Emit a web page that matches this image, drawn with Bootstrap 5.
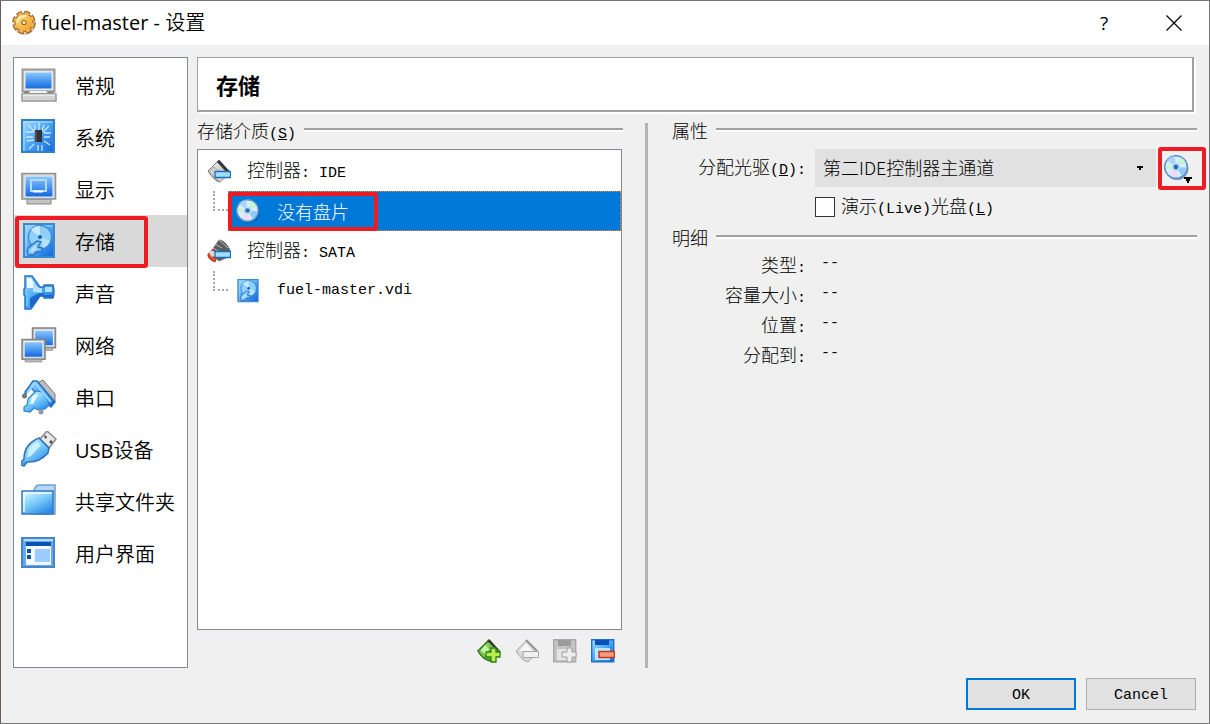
<!DOCTYPE html>
<html lang="zh-CN">
<head>
<meta charset="utf-8">
<meta name="viewport" content="width=device-width, initial-scale=1">
<title>fuel-master - 设置</title>
<link href="https://cdn.jsdelivr.net/npm/bootstrap@5.3.0/dist/css/bootstrap.min.css" rel="stylesheet">
<script src="https://cdn.jsdelivr.net/npm/bootstrap@5.3.0/dist/js/bootstrap.bundle.min.js"></script>
<style>
body{background:#f0f0f0;color:#000;font:300 18px/24px "Noto Sans CJK SC",sans-serif}
.en{font-family:"Liberation Mono",monospace;font-size:15px;font-weight:400;white-space:pre}
.window{min-height:100vh;border:1px solid #777;border-left-color:#6a5a58}
.titlebar{height:44px;background:#fff;font:400 20px/24px "Open Sans","Noto Sans CJK SC",sans-serif;padding:0 25px 0 10px}
.titlebar .zh{font-weight:350}
.cap{border:0;background:none;padding:0;width:20px;height:20px;line-height:20px;font-size:19px;display:flex;align-items:center;justify-content:center}
.work{padding:12px 12px 0 12px;gap:9px}
.side{width:175px;border:1px solid #828790;background:#fff;padding:1px 0;font:350 20px/24px "Open Sans","Noto Sans CJK SC",sans-serif}
.side a{height:52px;padding:4px 0 0 7px;gap:18px;color:#000;text-decoration:none;display:flex;align-items:center;position:relative}
.side a.active{background:#d9d9d9}
.side svg{width:36px;height:36px;flex:none;margin-bottom:4px}
.callout{position:absolute;border:4px solid #ed1c24;border-radius:3px;pointer-events:none}
.c-nav{left:1px;top:1px;width:133px;height:52px}
.c-tree{left:0;top:1px;width:150px;height:39px}
.c-btn{left:-3px;top:-2px;width:48px;height:43px}
.head{background:#fff;border:1px solid #a0a0a0;border-width:1px 2px 2px 1px;box-shadow:2px 2px 0 #fff;height:55px;padding-left:18px;margin-right:3px;display:flex;align-items:center}
.head h1{font-size:22px;font-weight:700;margin:0}
.panes{padding-top:11px}
.panes section{margin-top:-5px}
.grp{font-size:18px;font-weight:300;line-height:24px;height:24px;margin:0;gap:8px;display:flex;white-space:nowrap}
.grp::after{content:"";flex:1;height:4px;margin-top:10px;background:linear-gradient(#a0a0a0 50%,#fff 50%)}
.media{flex:0 0 426px}
.tree{background:#fff;border:1px solid #828790;padding:1px 0 0;margin:7px 1px 0 0}
.tree li{height:40px;display:flex;align-items:center;position:relative}
.tree svg{width:24px;height:24px;flex:none}
.ctl{padding-left:9px;gap:16px}
.leaf{padding-left:15px}
.leaf .stem{width:15px;height:20px;margin-bottom:20px;border:dotted #a8a8a8;border-width:0 0 2px 2px}
.leaf .node{height:40px;gap:17px;padding-left:8px;position:relative}
.leaf .node.active{background:#0078d7;color:#fff;outline:1px dotted #ff8728;outline-offset:-1px}
.tools{gap:14px;padding:9px 8px 5px}
.tools button{width:24px;height:24px;padding:0;border:0;background:none;display:flex}
.tools svg{width:24px;height:24px}
.splitter{width:3px;background:#b4b4b4;margin:0 24px 0 22px}
.fields{display:grid;grid-template-columns:134px 1fr;column-gap:9px;align-items:center;margin:0}
.form-rows{padding-top:7px}
.fields dt,.fields .lab{text-align:right;font-weight:300}
.fields dd{margin:0;padding-left:6px}
.fields dt,.fields dd{height:30px;line-height:30px}
.drive{height:38px;border:0;border-radius:0;padding:0 8px 2px;background:#e1e1e1 url("data:image/svg+xml,%3Csvg xmlns='http://www.w3.org/2000/svg' width='6' height='4'%3E%3Cpath d='M0 0h6v2H4v2H2V2H0z'/%3E%3C/svg%3E") no-repeat right 13px center;appearance:none;color:#000;font-weight:300}
.pick{width:36px;height:38px;border:0;padding:0;background:none;position:relative;margin-left:5px}
.pick svg{width:32px;height:32px;display:block;margin-left:2px}
.live-row{gap:6px;height:38px;padding-top:2px}
.tick{appearance:none;width:20px;height:20px;border:1px solid #333;background:#fff;margin:0}
.tick:checked{background:#0078d7}
.foot{gap:10px;padding:10px 13px 13px}
.foot .btn{width:110px;height:32px;border-radius:0;background:#e1e1e1;border:1px solid #adadad;padding:0;color:#000;line-height:24px}
.foot .btn.ok{border:2px solid #0078d7}
</style>
</head>
<body>
<svg width="0" height="0" class="position-absolute" aria-hidden="true">
<defs>
<linearGradient id="b" x1="0" y1="0" x2="1" y2="1"><stop offset="0" stop-color="#a6dcff"/><stop offset=".5" stop-color="#4aa5f5"/><stop offset="1" stop-color="#1465d6"/></linearGradient>
<linearGradient id="sc" x1="0" y1="0" x2="0" y2="1"><stop offset="0" stop-color="#8ccaff"/><stop offset="1" stop-color="#0f66e0"/></linearGradient>
<linearGradient id="li" x1="0" y1="0" x2=".7" y2="1"><stop offset="0" stop-color="#eafaff"/><stop offset=".5" stop-color="#7fd0fb"/><stop offset="1" stop-color="#2a8be8"/></linearGradient>
<linearGradient id="gd" x1="0" y1="0" x2="1" y2="1"><stop offset="0" stop-color="#ffe28a"/><stop offset="1" stop-color="#f09a1c"/></linearGradient>
<linearGradient id="gr" x1="0" y1="0" x2="1" y2="1"><stop offset="0" stop-color="#fff"/><stop offset="1" stop-color="#9c9c9c"/></linearGradient>
<linearGradient id="gn" x1="0" y1="0" x2="1" y2="1"><stop offset="0" stop-color="#b8f08a"/><stop offset="1" stop-color="#2c8f14"/></linearGradient>
<symbol id="disc" viewBox="0 0 24 24"><circle cx="12.500" cy="13" r="11" fill="#0a3c7c" opacity=".5"/><circle cx="11.500" cy="11.500" r="10.800" fill="#d9efff" stroke="#5a93cf" stroke-width="1.500"/><path d="M11.500 11.500 3 5a11 11 0 0 1 7-4z" fill="#a8d4fa"/><path d="M11.500 11.500 15 2a10 10 0 0 1 6 6z" fill="#c4f3d4"/><path d="M11.500 11.500 21 12a10 10 0 0 1-4 8z" fill="#94c8f8"/><path d="M11.500 11.500 13 21a10 10 0 0 1-8-3z" fill="#f3d8f4"/><path d="M11.500 11.500 2 14a10 10 0 0 1 0-5z" fill="#c6f5cc"/><circle cx="11.500" cy="11.500" r="4" fill="#b9dcf8"/><circle cx="11.500" cy="11.500" r="2.300" fill="#2b6cb8"/></symbol>
<symbol id="hdd" viewBox="0 0 36 36"><path d="M3 1h30v33H3z" fill="url(#b)" stroke="#3a8ad2" stroke-width="2"/><path d="M5 33V3h27" fill="none" stroke="#9fd4fb"/><circle cx="19" cy="14" r="11.500" fill="#8fd0fa" stroke="#3c8ad6" stroke-width="1.300"/><path d="M19 14 10 7a11 11 0 0 1 9-4z" fill="#c4e8fe"/><path d="M19 14 29 18a11 11 0 0 1-7 7z" fill="#b6e1fe"/><path d="M16 18 7 25q-2 5 1 7h4l3-3 6-1v-3l-4-1 3-5z" fill="#7fc4f5" stroke="#2d72c0" stroke-width="1.300"/><path d="m15 21-6 6 2 3 5-4" fill="#b2e0fc"/><circle cx="19" cy="14" r="2" fill="#155fb4"/></symbol>
<symbol id="mon" viewBox="0 0 24 24"><path d="M1 1h22v19H1z" fill="#c8c8c8" stroke="#858585" stroke-width="1.500"/><path d="M3 3h18v15H3z" fill="url(#sc)" stroke="#eee"/><path d="M4 20h16v2.500H4z" fill="#bbb" stroke="#888" stroke-width=".7"/></symbol>
</defs>
</svg>
<div class="window d-flex flex-column">
<header class="titlebar d-flex align-items-center">
<svg width="26" height="26" viewBox="0 0 26 26" class="me-1" aria-hidden="true"><circle cx="13.500" cy="14" r="11" fill="#7b5a3d" opacity=".3"/><circle cx="13" cy="12.500" r="9.500" fill="#9a622a" stroke="#9a622a" stroke-width="4.600" stroke-dasharray="5.400 2.060"/><circle cx="13" cy="12.500" r="8.500" fill="url(#gd)"/><circle cx="13" cy="12.500" r="9.200" fill="none" stroke="#f4b64c" stroke-width="2.600" stroke-dasharray="4 3.220" stroke-dashoffset="-.7"/><path d="M6 13q1-7 9-7" fill="none" stroke="#fff1b5" stroke-width="2"/><circle cx="13" cy="12.500" r="2.600" fill="#a25b10"/><circle cx="13" cy="12.500" r="1.500" fill="#fff"/></svg>
<span>fuel-master - <span class="zh">设置</span></span>
<div class="ms-auto d-flex" style="gap:50px">
<button class="cap" type="button" aria-label="帮助">?</button>
<button class="cap" type="button" aria-label="关闭"><svg width="16" height="16" viewBox="0 0 16 16"><path d="m.5.500 15 15m0-15-15 15" stroke="#000" stroke-width="1.200"/></svg></button>
</div>
</header>
<div class="work d-flex flex-grow-1">
<nav class="side flex-shrink-0">
<a href="#"><svg viewBox="0 0 36 36"><path d="M1.500 2.500h32v22h-32z" fill="#d8d8d8" stroke="#999" stroke-width="2"/><path d="M4 5h27v17H4z" fill="url(#sc)" stroke="#f4f4f4"/><path d="M4 24h27l4 4H1z" fill="#888"/><path d="M9 24h16l2 2H8z" fill="#f4f4f4"/><path d="M1 27h34v7H1z" fill="#d4d4d4" stroke="#999" stroke-width="1.500"/><path d="M2 28h32" stroke="#fff"/></svg>常规</a>
<a href="#"><svg viewBox="0 0 36 36"><path d="M1 1h32v32H1z" fill="url(#b)" stroke="#2f7fd0" stroke-width="2"/><path d="M3 32V3h29" fill="none" stroke="#b9defa"/><path d="M14 6v6m4-8v7m5-5-2 6M5 13h8m-8 5h7m-6 4 7-1m0 4-5 5m9-4v6m4-6v6m2-18h7m-7 4h6m-6 4 6 4M7 6l6 6M28 7l-6 6" stroke="#c8e6fe" stroke-width="1.300"/><path d="M14 11h7v12h-7z" fill="#333"/><path d="M14 12h2v11h-2z" fill="#5b4a42"/></svg>系统</a>
<a href="#"><svg viewBox="0 0 36 36"><path d="M6 28h24v5H6z" fill="#c4c4c4" stroke="#858585"/><path d="M1 2.500h33.500V28H1z" fill="#ccc" stroke="#929292" stroke-width="1.600"/><path d="M4 5h28v21H4z" fill="url(#sc)" stroke="#edf5ff"/><path d="M10 9h15v11H10z" fill="none" stroke="#b2dcff" stroke-width="2"/><path d="M12 20.500h10" stroke="#fff" stroke-width="2"/></svg>显示</a>
<a href="#" class="active"><svg><use href="#hdd"/></svg>存储<span class="callout c-nav"></span></a>
<a href="#"><svg viewBox="0 0 36 36"><path d="M4 1h7l8 11h4v-2h9q2 7 0 13h-9v-2h-4l-9 13H4V21l-1-1v-6l1-1z" fill="url(#b)" stroke="#2a72c0" stroke-width="1.500"/><path d="M6 3h4l6 10H6z" fill="#ebfaff"/><path d="m9 23 9-5h5v2h9v2h-8l-5-1-8 11H9z" fill="#1969cf"/><path d="M6 16v15" stroke="#57d0f6" stroke-width="2"/><path d="M12 8v9l9 1v-5h-3zm12 4v5h7v-5z" fill="#b2e2fc"/></svg>声音</a>
<a href="#"><svg viewBox="0 0 36 36"><use href="#mon" x="10" y="0" width="26" height="25"/><use href="#mon" x="0" y="11" width="25" height="26"/></svg>网络</a>
<a href="#"><svg viewBox="0 0 36 36"><path d="m18 3 4-2 12 14v8l-3-1-3 4-7-4z" fill="#bebebe" stroke="#777"/><path d="m4 13 8-11h4l18 21-4 5-5-4-15-15-6 7z" fill="url(#b)" stroke="#236ebb" stroke-width="1.300"/><path d="m7 20 8-8 6 1 6 8 1 5-4 4-7 1-4-2-4 4-6-1v-4l3-2z" fill="url(#li)" stroke="#3084cc" stroke-width="1.200"/><path d="m6 14 8-10 16 19" fill="none" stroke="#98d7ff" stroke-width="2"/><circle cx="3.500" cy="17" r="2.500" fill="#777"/><circle cx="20" cy="33" r="2.500" fill="#999"/><path d="M11 18q3-4 6-2l-5 9H9z" fill="#e8faff"/></svg>串口</a>
<a href="#"><svg viewBox="0 0 36 36"><path d="m19 8 7-8 9 8-7 9z" fill="#e8e8e8" stroke="#8a8a8a" stroke-width="1.500"/><path d="m23 6 1-2 2 2-1 2zm5 5 2-2 2 2-2 2z" fill="#555"/><path d="m18 7 10 10-1 5Q18 32 6 31l-3 4-3-1v-3l3-3Q3 13 18 7z" fill="url(#li)" stroke="#2f70b7" stroke-width="1.500"/><path d="M8 18q4-6 9-7l3 3-10 11-4 2z" fill="#dcf6ff" opacity=".8"/><path d="m1 32 4-2-2 4z" fill="#348ee2"/></svg><span><span class="fw-normal">USB</span>设备</span></a>
<a href="#"><svg viewBox="0 0 36 36"><path d="M13 7q2-5 5-5h16v29H10z" fill="#b5d7f7" stroke="#6c9fd7" stroke-width="1.500"/><path d="M1 8h31v23H1z" fill="url(#li)" stroke="#3978bd" stroke-width="1.500"/><path d="M3 29V10h28" fill="none" stroke="#effcff" stroke-width="1.500"/></svg>共享文件夹</a>
<a href="#"><svg viewBox="0 0 36 36"><path d="M1 3h32v29H1z" fill="#65aaf0" stroke="#4684cc" stroke-width="2"/><path d="M3 5h29" stroke="#b8dcff" stroke-width="2"/><path d="M5 7h25v23H5z" fill="#f3f8ff"/><path d="M5 7h25v4H5zM6 14h4v4H6zm0 6h4v4H6z" fill="#0b50b4"/><path d="M14 14h15v13H14z" fill="#9ccbff"/></svg>用户界面</a>
</nav>
<main class="flex-grow-1 d-flex flex-column">
<div class="head"><h1>存储</h1></div>
<div class="panes d-flex flex-grow-1">
<section class="media d-flex flex-column">
<h2 class="grp"><span>存储介质<span class="en">(<u>S</u>)</span></span></h2>
<ul class="tree list-unstyled flex-grow-1 mb-0">
<li class="ctl"><svg viewBox="0 0 24 24"><path d="m1 12 11-11 11 12-10 10q-6-1-12-11z" fill="url(#gr)" stroke="#777"/><path d="m10 3 2-2 11 12-2 2z" fill="#333"/><path d="m2 13 5-5 12 10-6 5z" fill="#d5d5d5" stroke="#888" stroke-width=".7"/><path d="M8 12.500h15.500v6H8z" fill="#9ee0ff" stroke="#226eb5" stroke-width="1.300"/></svg><span>控制器<span class="en">: IDE</span></span></li>
<li class="leaf"><span class="stem"></span><div class="node active flex-grow-1 d-flex align-items-center"><svg><use href="#disc"/></svg>没有盘片<span class="callout c-tree"></span></div></li>
<li class="ctl"><svg viewBox="0 0 24 24"><path d="m3 14 9-13q6 0 11 10v6L12 22z" fill="#5c5c5c" stroke="#777"/><path d="m8 5 7 4M6 9l7 4m-1-12 9 8" stroke="#bbb"/><path d="m1 15 5-4 5 4-3 8-4-2q-4-3-3-6z" fill="#e74c2e" stroke="#ad321e"/><path d="M2 14q1-3 5-2l2 4-4 2z" fill="#d8d8d8"/><path d="M8 12.500h15.500v6H8z" fill="#9ee0ff" stroke="#226eb5" stroke-width="1.300"/></svg><span>控制器<span class="en">: SATA</span></span></li>
<li class="leaf"><span class="stem"></span><div class="node flex-grow-1 d-flex align-items-center"><svg><use href="#hdd"/></svg><span class="en">fuel-master.vdi</span></div></li>
</ul>
<div class="tools d-flex justify-content-end">
<button type="button" aria-label="添加控制器"><svg viewBox="0 0 24 24"><path d="m1 12 11-11 11 12-9 9q-8-1-13-10z" fill="url(#gn)" stroke="#28730f" stroke-width="1.500"/><path d="m10 2 3-1 9 10-3-1z" fill="#333"/><path d="m4 11 4-5 4 4-3 6z" fill="#c8f6a6"/><path d="M14 9h5v4h4v5h-4v5h-5v-5h-5v-5h5z" fill="#b7ee54" stroke="#347e12" stroke-width="1.300"/></svg></button>
<button type="button" aria-label="删除控制器"><svg viewBox="0 0 24 24"><path d="m1 12 11-11 11 12-10 10q-6-1-12-11z" fill="#d8d8d8" stroke="#aaa"/><path d="m4 12 7-8 7 8z" fill="#f6f6f6"/><path d="m11 1 11 11" stroke="#969696" stroke-width="2"/><path d="M8 12.500h15.500v6H8z" fill="#f0f0f0" stroke="#a5a5a5"/></svg></button>
<button type="button" aria-label="添加虚拟盘"><svg viewBox="0 0 24 24"><path d="M.7.700h22v22h-22z" fill="#c4c4c4" stroke="#a9a9a9" stroke-width="1.400"/><path d="M5 1h13v6H5z" fill="#9d9d9d"/><path d="M4 10h15v11H4z" fill="#e5e5e5"/><path d="M14 9h5v4h4v5h-4v5h-5v-5H9v-5h5z" fill="#eee" stroke="#a0a0a0"/></svg></button>
<button type="button" aria-label="删除虚拟盘"><svg viewBox="0 0 24 24"><path d="M.7.700h22v22h-22z" fill="url(#b)" stroke="#1d70cd" stroke-width="1.400"/><path d="M4 1h14v5H4z" fill="#0750b7"/><path d="M4 9h15v12H4z" fill="#b9e8ff"/><path d="M8 12.500h15.500v6H8z" fill="#f79a7f" stroke="#bf3a21" stroke-width="1.500"/></svg></button>
</div>
</section>
<div class="splitter flex-shrink-0"></div>
<section class="flex-grow-1">
<h2 class="grp">属性</h2>
<div class="fields form-rows">
<label class="lab" for="drive">分配光驱<span class="en">(<u>D</u>):</span></label>
<div class="d-flex"><select id="drive" class="drive flex-grow-1"><option>第二IDE控制器主通道</option></select>
<button class="pick" type="button" aria-label="选择虚拟光盘"><svg viewBox="0 0 32 32"><use href="#disc" x="1" y="3" width="25" height="25"/><path d="M21 25h8v2h-2v2h-1v2h-2v-2h-1v-2h-2z"/></svg><span class="callout c-btn"></span></button></div>
<span></span>
<div class="live-row d-flex align-items-center"><input class="tick" type="checkbox" id="live"><label for="live">演示<span class="en">(Live)</span>光盘<span class="en">(<u>L</u>)</span></label></div>
</div>
<h2 class="grp">明细</h2>
<dl class="fields">
<dt>类型<span class="en">:</span></dt><dd class="en">--</dd>
<dt>容量大小<span class="en">:</span></dt><dd class="en">--</dd>
<dt>位置<span class="en">:</span></dt><dd class="en">--</dd>
<dt>分配到<span class="en">:</span></dt><dd class="en">--</dd>
</dl>
</section>
</div>
</main>
</div>
<footer class="foot d-flex justify-content-end">
<button type="button" class="btn ok"><span class="en">OK</span></button>
<button type="button" class="btn"><span class="en">Cancel</span></button>
</footer>
</div>
</body>
</html>
